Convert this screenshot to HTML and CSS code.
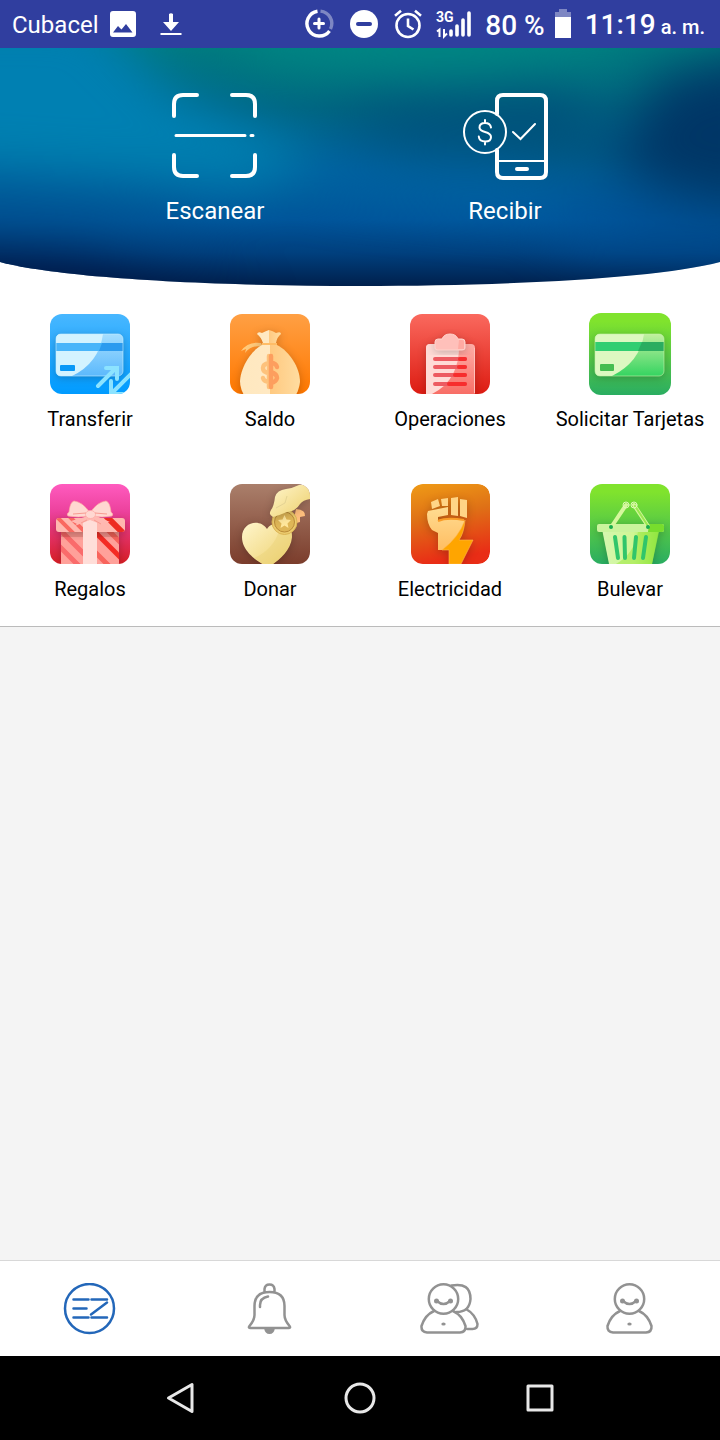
FILE: index.html
```html
<!DOCTYPE html>
<html lang="es">
<head>
<meta charset="utf-8">
<meta name="viewport" content="width=device-width, initial-scale=1">
<title>Inicio</title>
<link rel="stylesheet" href="styles.css">
</head>
<body>
<div class="screen">
  <header class="status">
    <div class="status-left">
      <span class="carrier">Cubacel</span>
      <svg class="picture-icon" width="26" height="26" viewBox="0 0 26 26" aria-hidden="true"><path fill="#fff" fill-rule="evenodd" d="M3 0H23Q26 0 26 3V23Q26 26 23 26H3Q0 26 0 23V3Q0 0 3 0ZM3 21.500H22.500L16 13L11.500 18.500L8 15Z"/></svg>
      <svg width="22" height="26" viewBox="0 0 22 26" aria-hidden="true"><path fill="#fff" d="M9 3Q11 1.500 13 3V11H19L11 20L3 11H9ZM.5 22H21.500V24H.5Z"/></svg>
    </div>
    <div class="status-right">
      <svg width="32" height="30" viewBox="0 0 32 30" fill="none" stroke="#fff" aria-hidden="true"><path stroke-width="3.400" d="M13.500 2.200A12.500 12.500 0 1 0 25.500 22"/><path stroke-width="3.400" opacity=".38" d="M16.500 2.100A12.500 12.500 0 0 1 26.500 20"/><path stroke-width="3" d="M15 10V19M10.500 14.500H19.500" stroke-linecap="round"/></svg>
      <svg width="30" height="30" viewBox="0 0 30 30" aria-hidden="true"><circle cx="14" cy="15" r="14" fill="#fff"/><path d="M8 15H20" stroke="#303e9f" stroke-width="4" stroke-linecap="round"/></svg>
      <svg width="28" height="30" viewBox="0 0 28 30" fill="none" stroke="#fff" stroke-width="2.600" aria-hidden="true"><circle cx="14" cy="16.500" r="11.500"/><path d="M14 9.500V17L19.500 20.500M1 6.800L7 1.800M21 1.800L27 6.800"/></svg>
      <svg width="35" height="30" viewBox="0 0 35 30" aria-hidden="true"><text x="0" y="13" class="network">3G</text><g stroke="#fff" fill="none"><path stroke-width="3.600" stroke-linecap="round" d="M15 22V26M21 17V26M27 11V26M33 4V26"/><path stroke-width="2" d="M1 22.500L3.500 20.500V28M8 20V27.500L11 24.500"/></g></svg>
      <div class="power"><span>80 %</span>
        <svg width="16" height="30" viewBox="0 0 16 30" fill="#fff" aria-hidden="true"><path opacity=".38" d="M4 0H12V3H16V8H0V3H4Z"/><path d="M0 8H16V29H0Z"/></svg>
      </div>
      <time>11:19 <small>a. m.</small></time>
    </div>
  </header>

  <main>
    <section class="hero">
      <svg class="hero-bg" viewBox="0 0 720 238" preserveAspectRatio="none" aria-hidden="true">
        <defs>
          <linearGradient id="sea" x1="0" y1="0" x2="0" y2="1"><stop offset="0" stop-color="#007a7f"/><stop offset=".25" stop-color="#006580"/><stop offset=".52" stop-color="#005f9a"/><stop offset=".72" stop-color="#00549a"/><stop offset=".86" stop-color="#00407e"/><stop offset="1" stop-color="#00204c"/></linearGradient>
          <clipPath id="curve"><path d="M0 0H720V214C600 246 120 246 0 214Z"/></clipPath>
          <filter id="soft" filterUnits="userSpaceOnUse" x="-300" y="-200" width="1320" height="640" color-interpolation-filters="sRGB"><feGaussianBlur stdDeviation="26"/></filter>
        </defs>
        <g clip-path="url(#curve)">
          <rect width="720" height="238" fill="url(#sea)"/>
          <g filter="url(#soft)">
            <path d="M-80 -40H90L170 40L330 110L250 140L-80 120Z" fill="#0080b2"/>
            <ellipse cx="420" cy="-10" rx="190" ry="34" fill="#008784"/>
            <path d="M330 60L560 40L640 110L560 116L400 104Z" fill="#00517a"/>
            <path d="M660 30L780 0V165L680 150L610 120Z" fill="#003666"/>
            <path d="M300 110L480 122L640 165L500 160L320 140Z" fill="#0063a6"/>
            <path d="M-60 130L130 150L220 190L-60 180Z" fill="#005090"/>
            <path d="M-80 202L80 212L260 250H-80Z" fill="#001240"/>
            <path d="M560 160L760 180V205L560 195Z" fill="#005095"/>
          </g>
        </g>
      </svg>
      <button class="action" type="button">
        <svg width="86" height="88" viewBox="0 0 86 88" fill="none" stroke="#fff" stroke-width="4" stroke-linecap="round" aria-hidden="true"><path d="M2 23V11Q2 2 11 2H25M60 2H74Q83 2 83 11V23M2 62V74Q2 83 11 83H25M60 83H74Q83 83 83 74V62"/><path stroke-width="3" d="M4 42.500H73M79 42.500H81"/></svg>
        <span>Escanear</span>
      </button>
      <button class="action" type="button">
        <svg width="86" height="88" viewBox="0 0 86 88" fill="none" stroke="#fff" stroke-linecap="round" aria-hidden="true"><path stroke-width="4" d="M35 21V8Q35 2 41 2H78Q84 2 84 8V79Q84 85 78 85H41Q35 85 35 79V57"/><circle cx="23" cy="39" r="21" stroke-width="2"/><path stroke-width="2" d="M35 68H84M51 39L58.500 46L73 31"/><path stroke-width="4" d="M55 76H65"/><path stroke-width="2" d="M29 34.500C28.500 31.500 26 30 23 30C19.500 30 17.500 32 17.500 34.500C17.500 40.500 29 37.500 29 44C29 47 26.500 48.500 23.300 48.500C19.500 48.500 17 46.500 16.800 43.500M23 27V30M23 49V51.500"/></svg>
        <span>Recibir</span>
      </button>
    </section>

    <nav class="services" aria-label="Servicios">
      <a href="#transferir">
        <svg viewBox="0 0 80 80" aria-hidden="true"><defs><linearGradient id="b1" x2="0" y2="1"><stop stop-color="#48b7ff"/><stop offset="1" stop-color="#009bff"/></linearGradient><linearGradient id="b2" x2="0" y2="1"><stop stop-color="#a5deff"/><stop offset="1" stop-color="#5cb9fc"/></linearGradient><clipPath id="tile"><rect width="80" height="80" rx="12"/></clipPath><filter id="shade" x="-30%" y="-30%" width="160%" height="160%" color-interpolation-filters="sRGB"><feDropShadow dx="0" dy="2" stdDeviation="4" flood-opacity=".22"/></filter></defs>
          <g clip-path="url(#tile)"><rect width="80" height="80" fill="url(#b1)"/><g filter="url(#shade)"><rect x="6" y="20" width="67" height="42" rx="5" fill="url(#b2)"/><path d="M11 20H53Q49 49 22 62H11Q6 62 6 57V25Q6 20 11 20Z" fill="#d3f3ff"/></g><path fill="#48b5fa" d="M6 29H73V37H6Z"/><path fill="#2c9bef" d="M52 29H73V37H49Z"/><rect x="10" y="51" width="15" height="6" rx="1" fill="#0898f7"/><rect x="6" y="20" width="67" height="42" rx="5" fill="none" stroke="#c8efff" stroke-opacity=".6"/><path d="M48 72L66 54M56 54H67V65M83 58L63 78M61 67V80H74" fill="none" stroke="#8ce3ff" stroke-width="4" stroke-linecap="round"/></g></svg>
        <span>Transferir</span></a>
      <a href="#saldo">
        <svg viewBox="0 0 80 80" aria-hidden="true"><defs><linearGradient id="o1" x2="0" y2="1"><stop stop-color="#ffa044"/><stop offset="1" stop-color="#ff7800"/></linearGradient><linearGradient id="o2"><stop stop-color="#ffe8bf"/><stop offset=".5" stop-color="#ffe9c3"/><stop offset=".5" stop-color="#ffc980"/><stop offset="1" stop-color="#ffdca0"/></linearGradient></defs>
          <g clip-path="url(#tile)"><rect width="80" height="80" fill="url(#o1)"/><path d="M31 29Q18 27 11 37L16 35L15 39Q22 30 33 33Z" fill="#ffca7c"/><g filter="url(#shade)" fill="url(#o2)"><path d="M33 29Q31 23 27 20Q28 17 32 19Q36 17 39 16Q43 17 46 19Q51 17 51 20Q47 23 46 29Z"/><path d="M32 31H47C59 37 70 53 70 68Q69 77 64 84H16Q10 76 10 67C11 52 22 36 32 31Z"/></g><path d="M32 30H47" stroke="#ffbd67" stroke-width="2"/><g fill="none" stroke-width="4.500" stroke-linecap="round"><path stroke="#fdc27c" d="M39 49Q33 50 33 54Q33 59 40 59M33 64Q34 68 40 68M39 42V73"/><path stroke="#fd9e5e" d="M41 49Q46 49 47 53M41 58Q47 60 47 64Q46 68 41 69M41 42V73"/></g></g></svg>
        <span>Saldo</span></a>
      <a href="#operaciones">
        <svg viewBox="0 0 80 80" aria-hidden="true"><defs><linearGradient id="r1" x2="0" y2="1"><stop stop-color="#fa695e"/><stop offset="1" stop-color="#dd1c12"/></linearGradient><linearGradient id="r2" x2="0" y2="1"><stop stop-color="#ffafa8"/><stop offset="1" stop-color="#f86e66"/></linearGradient></defs>
          <g clip-path="url(#tile)"><rect width="80" height="80" fill="url(#r1)"/><g filter="url(#shade)"><path d="M20 30H61Q65 30 65 34V80H16V34Q16 30 20 30Z" fill="url(#r2)"/><path d="M20 30H49Q50 66 22 80H16V34Q16 30 20 30Z" fill="#ffdbd6"/></g><path d="M64.500 79V34" stroke="#ffc0ba"/><path d="M25 45H55M25 53H55M25 61H55M25 70H55" stroke="#ed5b61" stroke-width="4" stroke-linecap="round"/><path d="M50 45H55M49 53H55M45 61H55M39 70H55" stroke="#f72d2d" stroke-width="4" stroke-linecap="round"/><g filter="url(#shade)"><path d="M28 25H32Q34 20 40 20Q46 20 48 25H52Q55 25 55 28V34Q55 36 52 36H28Q25 36 25 34V28Q25 25 28 25Z" fill="#ffc0ba" stroke="#ffd4cd"/></g><path fill="#ffaaa2" d="M49 26H52Q54 26 54 28V35H48Z"/></g></svg>
        <span>Operaciones</span></a>
      <a href="#tarjetas">
        <svg viewBox="0 0 80 80" aria-hidden="true"><defs><linearGradient id="g1" x2="0" y2="1"><stop offset=".1" stop-color="#80e32d"/><stop offset="1" stop-color="#2aad61"/></linearGradient><linearGradient id="g2" x2="0" y2="1"><stop stop-color="#c2f0a0"/><stop offset="1" stop-color="#35d461"/></linearGradient></defs>
          <rect x="-1" y="-1" width="82" height="82" rx="12" fill="url(#g1)"/><g filter="url(#shade)"><rect x="5" y="20" width="69" height="42" rx="5" fill="url(#g2)"/><path d="M10 20H54Q50 48 22 62H10Q5 62 5 57V25Q5 20 10 20Z" fill="#ddf8c1"/></g><path fill="#31ce71" d="M5 28H74V37H5Z"/><path fill="#2bad60" d="M52 28H74V37H48Z"/><rect x="10" y="50" width="14" height="7" rx="1" fill="#45bd50"/><rect x="5" y="20" width="69" height="42" rx="5" fill="none" stroke="#c4f4a8" stroke-opacity=".6"/></svg>
        <span>Solicitar Tarjetas</span></a>
      <a href="#regalos">
        <svg viewBox="0 0 80 80" aria-hidden="true"><defs><linearGradient id="p1" x2="0" y2="1"><stop stop-color="#ff5bbf"/><stop offset=".35" stop-color="#ec419c"/><stop offset="1" stop-color="#d71e25"/></linearGradient><clipPath id="box"><path d="M11 48H69V80H11Z"/></clipPath><clipPath id="lid"><rect x="6" y="34" width="69" height="14" rx="3"/></clipPath></defs>
          <g clip-path="url(#tile)"><rect width="80" height="80" fill="url(#p1)"/><g filter="url(#shade)"><g clip-path="url(#box)"><rect x="11" y="48" width="58" height="32" fill="#ffa19a"/><path d="M3 39L47 83M-3 50L38 91" stroke="#fa6b6b" stroke-width="5"/><path d="M40 43L80 83" stroke="#f42b24" stroke-width="5"/><path d="M54 42L84 72M36 59L62 85" stroke="#f8645c" stroke-width="5"/></g></g><path d="M11 48H69V53H11Z" fill="#8d302a" opacity=".2"/><g filter="url(#shade)"><g clip-path="url(#lid)"><rect x="5" y="33" width="72" height="16" fill="#ffb8af"/><path d="M4 30L24 50M17 30L37 50" stroke="#f96860" stroke-width="4"/><path d="M54 30L74 50" stroke="#ed2b22" stroke-width="6"/></g></g><path d="M33 34H47V80H33Z" fill="#ffded9"/><path d="M38 32L21 37L27 40L22 43L40 36L58 43L53 39L60 38L44 31Z" fill="#ffb9b2"/><g fill="#ffd8d1" stroke="#fda9a2" stroke-width=".7"><path d="M39 32Q28 34 18 32Q16 30 19 28Q20 18 24 17Q33 18 40 29Z"/><path d="M42 32Q52 34 62 32Q64 30 61 28Q60 18 56 17Q47 18 40 29Z"/><ellipse cx="40.500" cy="30.500" rx="5" ry="4"/></g><path d="M23 30L36 29M45 29L57 30M37 36L31 39M44 36L51 40" stroke="#f89b91"/></g></svg>
        <span>Regalos</span></a>
      <a href="#donar">
        <svg viewBox="0 0 80 80" aria-hidden="true"><defs><linearGradient id="d1" x2="0" y2="1"><stop stop-color="#aa7f6b"/><stop offset="1" stop-color="#7b3d2c"/></linearGradient><linearGradient id="d2" x2="1" y2="1"><stop stop-color="#fff6cd"/><stop offset="1" stop-color="#edcf6a"/></linearGradient></defs>
          <g clip-path="url(#tile)"><rect width="80" height="80" fill="url(#d1)"/><path filter="url(#shade)" d="M37 45C42 36 63 37 62 53C61 66 50 75 42 81H34C24 75 12 66 12 53C12 38 30 34 37 45Z" fill="url(#d2)"/><path d="M24 74Q43 66 49 47L62 50Q60 69 41 81H34Z" fill="#e9cf73" opacity=".4"/><path d="M66 25Q76 26 75 32L70 33V38L63 40Z" fill="#ffbf7d"/><circle cx="54.500" cy="38" r="12.500" fill="#eccb6e" stroke="#dcb454"/><circle cx="54.500" cy="38" r="10" fill="#dfb657" stroke="#bb8b39"/><path d="M54.500 31L56.500 35.500L61 36L57.500 39.500L58.500 44L54.500 41.500L50.500 44L51.500 39.500L48 36L52.500 35.500Z" fill="#ffe79d"/><path filter="url(#shade)" d="M80 1V15Q73 16 70 20Q66 27 57 28Q50 31 43 33Q38 31 41 26Q44 22 45 13Q47 6 56 5Q63 4 69 1Z" fill="url(#d2)"/><path d="M57 12L55 19L46 24" fill="none" stroke="#e4d394"/></g></svg>
        <span>Donar</span></a>
      <a href="#electricidad">
        <svg viewBox="0 0 80 80" aria-hidden="true"><defs><linearGradient id="e1" x2=".2" y2="1"><stop stop-color="#ef9b16"/><stop offset=".45" stop-color="#df7116"/><stop offset="1" stop-color="#e92d16"/></linearGradient><linearGradient id="e2" x2="0" y2="1"><stop stop-color="#ffdc91"/><stop offset="1" stop-color="#ffbd62"/></linearGradient></defs>
          <g clip-path="url(#tile)"><rect x="1" width="79" height="80" rx="12" fill="url(#e1)"/><g filter="url(#shade)"><path d="M21 18L28 15L30 22L22 25ZM31 15L38 14V22L32 22ZM41 14L48 13V32L41 31ZM50 15L57 16V34L50 32Z" fill="#ffd587"/><path d="M18 27L38 23V31L28 33V36Q42 33 54 36V42Q51 57 37 66H28V49L22 46Q17 40 17 30Z" fill="url(#e2)"/><path d="M55 36Q54 49 49 56H63L51 80H39V66H32Q49 53 55 36Z" fill="#ffa500" stroke="#ffb94f" stroke-width=".6"/></g><path d="M28 37Q37 33 54 36" fill="none" stroke="#fa9b25" stroke-width="2"/></g></svg>
        <span>Electricidad</span></a>
      <a href="#bulevar">
        <svg viewBox="0 0 80 80" aria-hidden="true"><defs><linearGradient id="k1"><stop stop-color="#d5f7b0"/><stop offset=".55" stop-color="#cff693"/><stop offset="1" stop-color="#79e12f"/></linearGradient></defs>
          <g clip-path="url(#tile)"><rect width="80" height="80" fill="url(#g1)"/><g filter="url(#shade)"><path d="M12 45H69L62 80H19Z" fill="url(#k1)"/><path d="M48 48H69L62 80H26Q44 70 48 48Z" fill="#a1e94b" opacity=".6"/><path d="M25 53L28 74M34.500 53L35 74M46 53L44 74M56 53L53 74" stroke="#30c56a" stroke-width="4" stroke-linecap="round"/><rect x="7" y="40" width="67" height="8" rx="2" fill="#caf49d"/><path d="M59 40H72Q74 40 74 42V46Q74 48 72 48H58Z" fill="#77dd2d"/></g><g fill="none" stroke-linecap="round"><path d="M22 42L36 21M58 42L44 21" stroke="#d5f79d" stroke-width="4"/><path d="M58 42L45 22" stroke="#98e94e" stroke-width="2"/><circle cx="36" cy="21" r="3" stroke="#e0f9b8"/><circle cx="44" cy="21" r="3" stroke="#e0f9b8"/></g><circle cx="21" cy="43" r="2" fill="#17ac4d"/><circle cx="58" cy="43" r="2" fill="#17ac4d"/></g></svg>
        <span>Bulevar</span></a>
    </nav>
  </main>

  <nav class="tabs" aria-label="Principal">
    <a class="current" href="#inicio" aria-label="Inicio" aria-current="page"><svg width="60" height="52" viewBox="0 0 60 52" aria-hidden="true"><circle cx="29.500" cy="25.500" r="24.500"/><path d="M13.500 16.500H28.500M31.500 16.500H47M13.500 25.500H26.500M47 19.500L31 31.500M13.500 34.500H28.500M31.500 34.500H47"/></svg></a>
    <a href="#avisos" aria-label="Notificaciones"><svg width="60" height="52" viewBox="0 0 60 52" aria-hidden="true"><path d="M24.500 9V6Q25 1.500 29.500 1.500Q34 1.500 34.500 6V9M9.500 43Q14.500 37 14.500 32V23Q14.500 9 29.500 9Q44.500 9 44.500 23V32Q44.500 37 49.500 43Q51 45 48.500 45H10.500Q8 45 9.500 43ZM20 24V22Q20 15 28 13.500"/><path class="solid" d="M24 45H35Q34 51 29.500 51Q25 51 24 45Z"/></svg></a>
    <a href="#contactos" aria-label="Contactos"><svg width="60" height="52" viewBox="0 0 60 52" aria-hidden="true"><circle cx="23.500" cy="16" r="14.700"/><path d="M31.500 2.500Q50.500 -1 50.500 16Q49.500 29 36.500 29M46 26Q55 31 57.500 41Q57.500 46 52.500 46H47.500M14 28Q5 32 1.500 43Q1 49 7 49.500H40Q46 49 45.500 43Q42 32 33 28M17 18Q23.500 24 30 18"/><g class="solid"><circle cx="16.500" cy="18" r="2.500"/><circle cx="30.500" cy="18" r="2.500"/><ellipse cx="23.500" cy="41" rx="2.200" ry="1.600"/></g></svg></a>
    <a href="#perfil" aria-label="Perfil"><svg width="60" height="52" viewBox="0 0 60 52" aria-hidden="true"><circle cx="29.500" cy="16" r="14.700"/><path d="M20 28Q11 32 7.500 43Q7 49 13 49.500H46Q52 49 51.500 43Q48 32 39 28M23 18Q29.500 24 36 18"/><g class="solid"><circle cx="22.500" cy="18" r="2.500"/><circle cx="36.500" cy="18" r="2.500"/><ellipse cx="29.500" cy="41" rx="2.200" ry="1.600"/></g></svg></a>
  </nav>

  <footer class="system">
    <button type="button" aria-label="Atrás"><svg width="32" height="32" viewBox="0 0 32 32" aria-hidden="true"><path d="M28 2.500V29.500L4.500 16Z"/></svg></button>
    <button type="button" aria-label="Pantalla de inicio"><svg width="32" height="32" viewBox="0 0 32 32" aria-hidden="true"><circle cx="16" cy="16" r="14"/></svg></button>
    <button type="button" aria-label="Aplicaciones recientes"><svg width="32" height="32" viewBox="0 0 32 32" aria-hidden="true"><rect x="4" y="4" width="24" height="24"/></svg></button>
  </footer>
</div>
</body>
</html>
```
FILE: styles.css
```css
* { box-sizing: border-box; }

body {
  margin: 0;
  font-family: Roboto, "Noto Sans", sans-serif;
  color: #000;
}

svg { display: block; flex: none; }
a { color: inherit; text-decoration: none; }
button {
  border: 0;
  padding: 0;
  background: none;
  color: inherit;
  font: inherit;
}

.screen {
  min-height: 100vh;
  display: flex;
  flex-direction: column;
  background: #f4f4f4;
}

.status {
  height: 48px;
  padding: 0 15px 0 12px;
  display: flex;
  align-items: center;
  justify-content: space-between;
  background: #303e9f;
  color: #fff;
  white-space: nowrap;
}
.status-left, .status-right, .power { display: flex; align-items: center; }
.status-left { gap: 24px; font-size: 24px; line-height: 48px; }
.carrier { margin-right: -13px; padding-top: 2px; }
.status-right { gap: 14px; font-size: 28px; font-weight: 500; line-height: 44px; }
.power { gap: 10px; }
.status-right time, .power span { padding-top: 4px; }
.status-right small { font-size: 20px; margin-left: -2px; }
.network { font-size: 14px; font-weight: 700; fill: #fff; }

main { flex: 1; }

.hero {
  position: relative;
  height: 238px;
  padding: 45px 70px 0;
  display: grid;
  grid-template-columns: 1fr 1fr;
  align-items: start;
  background: #fff;
  color: #fff;
  font-size: 24px;
  line-height: 30px;
}
.hero-bg { position: absolute; inset: 0; width: 100%; height: 100%; }
.action {
  position: relative;
  display: flex;
  flex-direction: column;
  align-items: center;
  gap: 15px;
}

.services {
  padding: 28px 0 25px;
  display: grid;
  grid-template-columns: repeat(4, 1fr);
  row-gap: 53px;
  background: #fff;
  border-bottom: 1px solid #bbb;
}
.services a {
  display: flex;
  flex-direction: column;
  align-items: center;
  gap: 13px;
  font-size: 20px;
  line-height: 24px;
  white-space: nowrap;
}
.services svg { width: 80px; height: 80px; overflow: visible; }

.tabs {
  height: 96px;
  display: grid;
  grid-template-columns: repeat(4, 1fr);
  background: #fff;
  border-top: 1px solid #d8d8d8;
}
.tabs a { display: grid; place-items: center; color: #929292; }
.tabs .current { color: #2367b9; }
.tabs svg {
  fill: none;
  stroke: currentColor;
  stroke-width: 2.5px;
  stroke-linecap: round;
  stroke-linejoin: round;
}
.tabs .solid { fill: currentColor; stroke: none; }

.system {
  height: 84px;
  padding: 0 90px;
  display: grid;
  grid-template-columns: repeat(3, 1fr);
  background: #000;
}
.system button { display: grid; place-items: center; }
.system svg {
  fill: none;
  stroke: #e8e8e8;
  stroke-width: 3px;
  stroke-linejoin: round;
}
```
